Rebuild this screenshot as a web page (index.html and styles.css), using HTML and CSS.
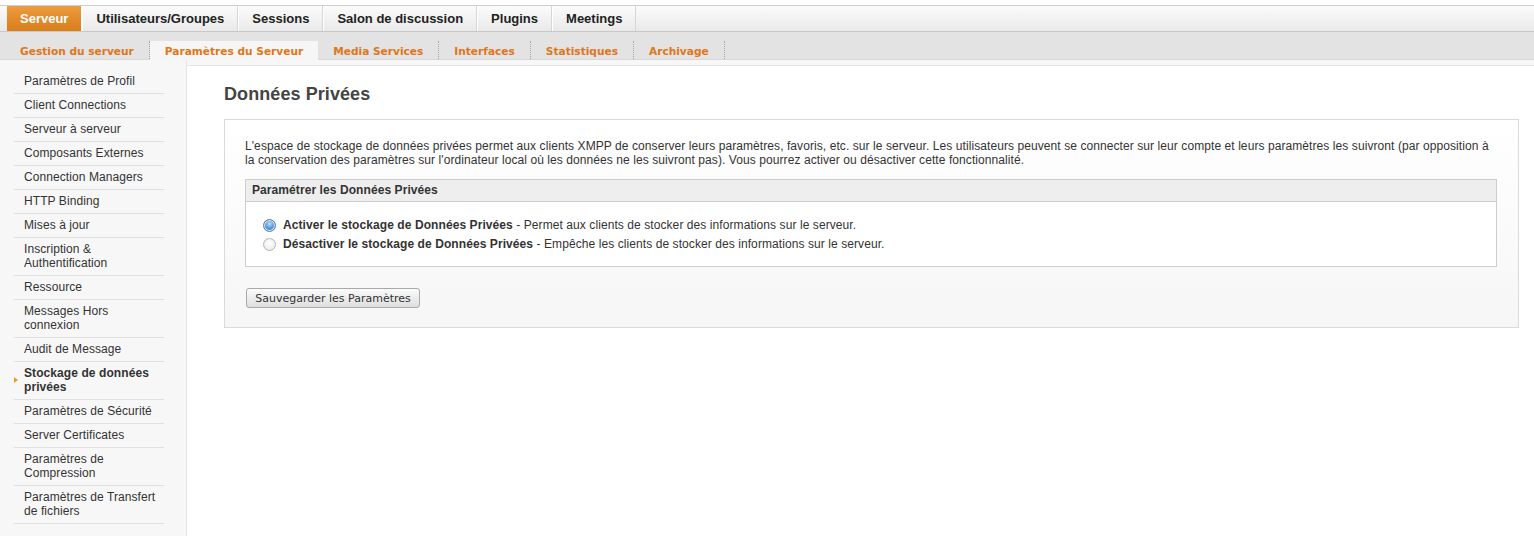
FILE: index.html
```html
<!DOCTYPE html>
<html lang="fr">
<head>
    <meta charset="UTF-8">
    <title>Données Privées</title>
    <link rel="stylesheet" href="styles.css">
</head>
<body>
    <div class="top-space"></div>

    <div class="mainnav">
        <ul>
            <li class="current"><a href="#">Serveur</a></li>
            <li><a href="#">Utilisateurs/Groupes</a></li>
            <li><a href="#">Sessions</a></li>
            <li><a href="#">Salon de discussion</a></li>
            <li><a href="#">Plugins</a></li>
            <li><a href="#">Meetings</a></li>
        </ul>
    </div>

    <div class="subnav">
        <ul>
            <li><a href="#">Gestion du serveur</a></li>
            <li class="current"><a href="#">Paramètres du Serveur</a></li>
            <li><a href="#">Media Services</a></li>
            <li><a href="#">Interfaces</a></li>
            <li><a href="#">Statistiques</a></li>
            <li><a href="#">Archivage</a></li>
        </ul>
    </div>

    <div class="page">
        <div class="sidebar">
            <ul>
                <li><a href="#">Paramètres de Profil</a></li>
                <li><a href="#">Client Connections</a></li>
                <li><a href="#">Serveur à serveur</a></li>
                <li><a href="#">Composants Externes</a></li>
                <li><a href="#">Connection Managers</a></li>
                <li><a href="#">HTTP Binding</a></li>
                <li><a href="#">Mises à jour</a></li>
                <li><a href="#">Inscription &amp; Authentification</a></li>
                <li><a href="#">Ressource</a></li>
                <li><a href="#">Messages Hors connexion</a></li>
                <li><a href="#">Audit de Message</a></li>
                <li class="current"><a href="#">Stockage de données privées</a></li>
                <li><a href="#">Paramètres de Sécurité</a></li>
                <li><a href="#">Server Certificates</a></li>
                <li><a href="#">Paramètres de Compression</a></li>
                <li><a href="#">Paramètres de Transfert de fichiers</a></li>
            </ul>
        </div>

        <div class="content">
            <h1>Données Privées</h1>

            <div class="box">
                <p>L'espace de stockage de données privées permet aux clients XMPP de conserver leurs paramètres, favoris, etc. sur le serveur. Les utilisateurs peuvent se connecter sur leur compte et leurs paramètres les suivront (par opposition à la conservation des paramètres sur l'ordinateur local où les données ne les suivront pas). Vous pourrez activer ou désactiver cette fonctionnalité.</p>

                <form action="private-data-agent-settings.jsp" method="POST">
                    <div class="settings">
                        <div class="settings-head">Paramétrer les Données Privées</div>
                        <div class="settings-body">
                            <label class="option">
                                <input type="radio" name="privateEnabled" value="true" checked>
                                <span><b>Activer le stockage de Données Privées</b> - Permet aux clients de stocker des informations sur le serveur.</span>
                            </label>
                            <label class="option">
                                <input type="radio" name="privateEnabled" value="false">
                                <span><b>Désactiver le stockage de Données Privées</b> - Empêche les clients de stocker des informations sur le serveur.</span>
                            </label>
                        </div>
                    </div>

                    <button type="submit">Sauvegarder les Paramètres</button>
                </form>
            </div>
        </div>
    </div>
</body>
</html>
```

FILE: styles.css
```css
/* General */
body {
    margin: 0;
    font-family: 'Liberation Sans', Arial, sans-serif;
    font-size: 12px;
    letter-spacing: 0.08px;
    color: #333;
    background: #fff;
}

ul {
    list-style: none;
    margin: 0;
    padding: 0;
}

a {
    text-decoration: none;
}

.top-space {
    height: 5px;
    background: #fff;
}

/* Main tabs */
.mainnav {
    height: 25px;
    border-top: 1px solid #cfcfcf;
    border-bottom: 1px solid #c8c8c8;
    background: linear-gradient(#fbfbfb, #e9e9e9);
    box-shadow: 0 1px 1px rgba(0, 0, 0, 0.08);
}

.mainnav ul {
    display: flex;
    padding-left: 7px;
    height: 100%;
}

.mainnav li {
    border-right: 1px solid #d6d6d6;
    border-left: 1px solid #fff;
}

.mainnav li:first-child {
    border-left: none;
}

.mainnav a {
    display: block;
    height: 25px;
    line-height: 26px;
    padding: 0 13px;
    font-size: 13px;
    font-weight: bold;
    letter-spacing: 0;
    color: #222;
}

.mainnav li.current {
    border-right-color: #fff;
}

.mainnav li.current a {
    color: #fff;
    background: linear-gradient(#ed9c3e, #d87d1a);
}

/* Sub tabs */
.subnav {
    height: 27px;
    background: #e3e3e3;
    border-bottom: 1px solid #d8d8d8;
}

.subnav ul {
    display: flex;
    align-items: flex-end;
    height: 100%;
    padding-left: 5px;
}

.subnav li {
    height: 18px;
    border-right: 1px dotted #9aa6b0;
}

.subnav li.current {
    background: #f6f6f6;
    border-right: none;
    height: 19px;
    margin-bottom: -1px;
}

.subnav a {
    display: block;
    height: 18px;
    padding: 0 15px;
    line-height: 21px;
    font-family: 'DejaVu Sans', Verdana, sans-serif;
    font-size: 10.6px;
    font-weight: bold;
    letter-spacing: 0;
    color: #e0761a;
}

/* Page */
.page {
    display: flex;
    min-height: calc(100vh - 60px);
    background: #f7f7f7;
}

.sidebar {
    width: 186px;
    flex-shrink: 0;
    border-right: 1px solid #e4e4e4;
    padding-top: 10px;
}

.sidebar ul {
    margin-left: 14px;
    width: 150px;
}

.sidebar li {
    position: relative;
    border-bottom: 1px solid #e0e0e0;
    padding: 4px 0 5px 10px;
    line-height: 14px;
}

.sidebar a {
    color: #333;
}

.sidebar li.current a {
    font-weight: bold;
}

.sidebar li.current::before {
    content: "";
    position: absolute;
    left: 0;
    top: 15px;
    border-left: 4px solid #e8a020;
    border-top: 3px solid transparent;
    border-bottom: 3px solid transparent;
}

.content {
    flex: 1;
    margin-top: 5px;
    background: #fff;
    border-top: 1px solid #e4e4e4;
    padding: 17px 15px 20px 37px;
}

h1 {
    margin: 0 0 14px;
    font-size: 18px;
    line-height: 22px;
    color: #444;
}

/* Settings box */
.box {
    border: 1px solid #dadada;
    background: linear-gradient(#fff, #f6f6f6);
    padding: 19px 21px 19px 20px;
}

.box p {
    margin: 0 0 12px;
    line-height: 14px;
}

.settings {
    border: 1px solid #cdcdcd;
    background: #fff;
}

.settings-head {
    background: #eee;
    border-bottom: 1px solid #cdcdcd;
    padding: 0 6px;
    line-height: 21px;
    font-weight: bold;
}

.settings-body {
    padding: 16px 17px 15px;
}

.option {
    display: flex;
    align-items: center;
    gap: 7px;
    line-height: 14px;
    margin-bottom: 5px;
}

.option:last-child {
    margin-bottom: 0;
}

.option input {
    appearance: none;
    width: 13px;
    height: 13px;
    margin: 0;
    border: 1px solid #b4b4b4;
    border-radius: 50%;
    background: radial-gradient(circle at 50% 40%, #fff, #e6e6e6);
}

.option input:checked {
    border-color: #5a7fa8;
    background: radial-gradient(circle at 50% 35%, #bfe0ff 0, #5b9be0 45%, #2f6fbf 100%);
    box-shadow: inset 0 0 0 1px #d9ecff;
}

button {
    margin-top: 21px;
    margin-left: 1px;
    width: 174px;
    height: 20px;
    padding: 0;
    font-family: 'DejaVu Sans', Verdana, sans-serif;
    font-size: 11px;
    letter-spacing: 0;
    color: #333;
    border: 1px solid #a9a9a9;
    border-radius: 3px;
    background: linear-gradient(#fbfbfb, #dedede);
    cursor: pointer;
}
```
